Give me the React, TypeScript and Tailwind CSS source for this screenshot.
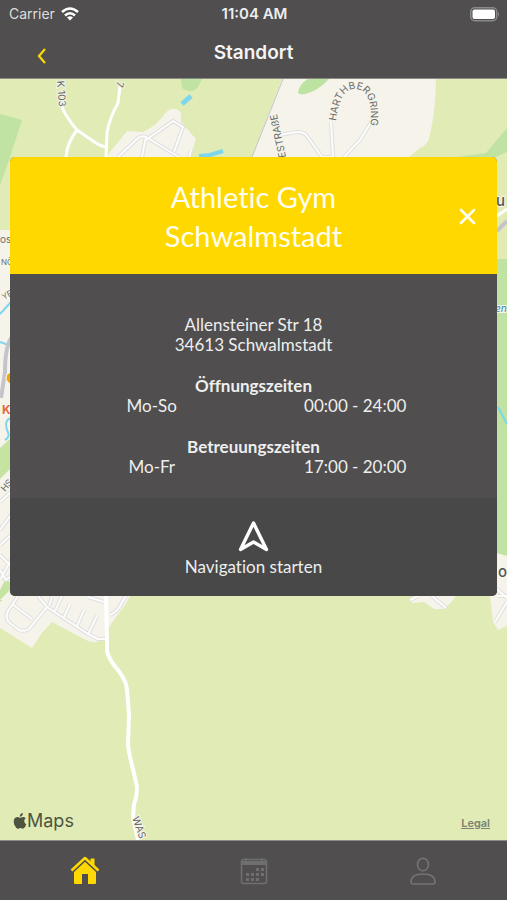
import { useState } from 'react'
import type { ReactNode } from 'react'

interface Hours {
  title: string
  rows: { days: string; time: string }[]
}

const HOURS: Hours[] = [
  { title: 'Öffnungszeiten', rows: [{ days: 'Mo-So', time: '00:00 - 24:00' }] },
  { title: 'Betreuungszeiten', rows: [{ days: 'Mo-Fr', time: '17:00 - 20:00' }] },
]

// light roads inside the built-up areas
const STREETS = [
  'M118 157L137 139Q141 135 146 137L179 157',
  'M146 140L173 121L183 127L174 152',
  'M146 137L142 157',
  'M191 150L189 158',
  'M281 135C293 133 301 129 307 136L322 157H333L331 122',
  'M373 119L360 140L344 157',
  'M18 596L8 611Q4 619 11 624L19 630Q24 632 29 629L47 607',
  'M12 604L32 619',
  'M38 596L47 607L88 634L98 639H107',
  'M52 597L49 606',
  'M62 596L55 611',
  'M70 604L64 617',
  'M84 610L77 626',
  'M97 616L88 634',
  'M88 597L104 602',
  'M110 615Q119 611 122 602L126 596',
  'M0 502L11 492',
  'M0 530L11 515',
  'M0 545L11 535',
  'M0 555L11 566',
  'M0 580L11 560',
  'M0 570L6 580L11 576',
  'M432 596L446 608',
  'M410 600L418 596',
  'M497 596H507',
  'M495 622L507 602',
  'M497 589L507 598',
]

function MapView() {
  return (
    <svg
      className="absolute inset-0 w-full h-full"
      viewBox="0 79 507 761"
      preserveAspectRatio="xMidYMid slice"
      aria-hidden="true"
      fontFamily="Inter, sans-serif"
    >
      <defs>
        <path id="ring" d="M336 121C338 106 342 89 355 89C368 89 373 104 370 130" />
      </defs>
      <rect y="79" width="507" height="761" fill="#e0ebb6" />

      {/* woods and meadows */}
      <g fill="#c0e2a2">
        <path d="M0 114L22 120L9 160L0 185Z" />
        <path d="M181 79H202L198 87Q191 95 182 88Z" />
        <path d="M457 157L486 153L507 128V560H496V157Z" />
        <path d="M0 596L11 588V590L0 602Z" />
      </g>
      <path d="M496 157L507 152V259H496Z" fill="#e0ebb6" />

      {/* built-up areas */}
      <g fill="#f5f3ea">
        <path d="M106 157L127 131L143 132Q158 125 166 112Q175 105 181 113V122L196 139L190 158Z" />
        <path d="M282 79H436Q436 110 429 139Q426 146 420 148L409 157H252Z" />
        <path d="M0 230H12V600H0Z" />
        <path d="M8 596H130L125 605L109 627L107 639L96 642Q90 643 84 639L52 622L42 633L32 648L0 628V602Z" />
        <path d="M410 601L418 596H456L450 604L443 609H434L424 602L412 603Z" />
        <path d="M490 596L497 553L507 556V626L498 630L493 622Z" />
      </g>
      <path d="M298 92Q300 83 308 79H329Q318 91 305 94Q298 95 298 92Z" fill="#bce3a1" />
      <path d="M0 448L11 438V468L0 479Z" fill="#c5e3a1" />
      <path d="M0 590L6 578L11 584V589L0 600Z" fill="#c5e3a1" />

      {/* water */}
      <g fill="none" stroke="#7ed6ed" strokeLinecap="butt">
        <path d="M182 104L191 96" strokeWidth="5" />
        <path d="M199 156L210 155L223 151" strokeWidth="4" />
        <path d="M0 314L11 302" strokeWidth="2" />
        <path d="M0 342L11 346M11 418Q4 420 7 430Q11 437 5 440" strokeWidth="2" />
        <path d="M498 407L507 424" strokeWidth="2" />
      </g>

      {/* main road and railway on the edges */}
      <g fill="none" stroke="#c4c4cb">
        <path d="M11 338Q5 348 5 372L1 398" strokeWidth="4" />
        <path d="M497 231L507 221" strokeWidth="4" />
        <path d="M283 79L252 157" strokeWidth="1" />
      </g>
      <path d="M497 216L507 209" stroke="#fff" strokeWidth="3" />

      <g fill="none" stroke="#e0dfe0" strokeWidth="4" strokeLinejoin="round">
        {STREETS.map(d => <path key={d} d={d} />)}
      </g>
      <g fill="none" stroke="#fdfdfb" strokeWidth="2" strokeLinejoin="round">
        {STREETS.map(d => <path key={d} d={d} />)}
      </g>

      <g fill="none" stroke="#fff" strokeLinejoin="round">
        <path d="M62 107Q66 117 77 130L96 143Q100 146 106 147M77 130Q67 143 66 157" strokeWidth="3" />
        <path d="M120 86L118 103Q109 119 107 133L106 157" strokeWidth="3" />
        <path
          d="M106 596L107 640V651Q109 660 118 670Q127 682 127 690L129 715L128 745Q129 754 133 769L137 787Q137 797 134 804L133 818L138 840"
          strokeWidth="4"
        />
      </g>

      <g fill="#6b6b6b" fontSize="10" stroke="#f5f5ea" strokeWidth="2" paintOrder="stroke">
        <text transform="translate(57 81) rotate(86)">K 103</text>
        <text transform="translate(117 81) rotate(102)">7</text>
        <text>
          <textPath href="#ring">HARTHBERGRING</textPath>
        </text>
        <text transform="translate(286 157) rotate(-102)">ESTRAßE</text>
        <text transform="translate(132 818) rotate(70)">WAS</text>
        <text x="0" y="243">os</text>
        <text x="1" y="265" fontSize="8">NÖ</text>
        <text transform="translate(4 300) rotate(-30)" fontSize="8">YE</text>
        <text transform="translate(5 492) rotate(-50)" fontSize="9">HS</text>
      </g>
      <g fontSize="15" fontWeight="500" fill="#555" stroke="#f8f8f0" strokeWidth="2" paintOrder="stroke">
        <text x="496" y="206">u</text>
        <text x="498" y="577">o</text>
        <text x="2" y="414" fontSize="12" fontWeight="700" fill="#e0683c">K</text>
        <text x="495" y="312" fontSize="10" fontStyle="italic" fill="#4b94c4">en</text>
      </g>
      <circle cx="12" cy="378" r="6" fill="#f5a400" stroke="#fff" />
    </svg>
  )
}

function StatusBar() {
  return (
    <div className="grid grid-cols-3 items-center h-7 pl-[9px] pr-[7px] text-sm">
      <div className="flex items-center gap-1.5">
        <span className="text-[#dedede]">Carrier</span>
        <svg className="w-[18px] h-[14px]" viewBox="0 0 18 14" fill="none" stroke="#fff" strokeWidth="2.6" aria-label="WLAN">
          <path d="M1 5Q9-2 17 5M4 8.5Q9 4 14 8.5" />
          <path d="M9 13.5L6 10.5Q9 8 12 10.5Z" fill="#fff" stroke="none" />
        </svg>
      </div>
      <span className="text-center text-[15px] font-semibold text-[#ededed]">11:04 AM</span>
      <svg className="justify-self-end w-[30px] h-[15px]" viewBox="0 0 30 15" aria-label="Akku">
        <rect x="0.75" y="0.75" width="26" height="13" rx="4" fill="none" stroke="#8b8a8b" strokeWidth="1.5" />
        <rect x="2.5" y="2.5" width="22.5" height="9.5" rx="2" fill="#fff" />
        <path d="M28 5Q30 7.2 28 9.5Z" fill="#8b8a8b" />
      </svg>
    </div>
  )
}

function LocationCard({ onClose }: { onClose: () => void }) {
  return (
    <section className="relative mx-2.5 rounded-[5px] overflow-hidden text-center text-[#eeeeee] bg-[#504e4e] font-['Lato',sans-serif] [font-variant-ligatures:none]">
      <div className="grid grid-cols-[1fr_auto_1fr] items-center bg-[#ffd800] pt-5 pb-[19px]">
        <h2 className="col-start-2 w-48 text-[29px] leading-[39px] text-[#fffef0]">Athletic Gym Schwalmstadt</h2>
        <button type="button" aria-label="Schließen" onClick={onClose} className="justify-self-end mr-5">
          <svg className="w-[19px] h-[19px]" viewBox="0 0 19 19" fill="none" stroke="#fffef0" strokeWidth="2.6" strokeLinecap="round">
            <path d="M3 3L16 16M16 3L3 16" />
          </svg>
        </button>
      </div>

      <div className="px-10 pt-[41px] pb-[21px] text-[17px] leading-5">
        <address className="not-italic">
          Allensteiner Str 18
          <br />
          34613 Schwalmstadt
        </address>
        {HOURS.map(h => (
          <table key={h.title} className="w-full mt-[21px] table-fixed">
            <caption className="font-bold">{h.title}</caption>
            <tbody>
              {h.rows.map(r => (
                <tr key={r.days}>
                  <th scope="row" className="font-normal">{r.days}</th>
                  <td>{r.time}</td>
                </tr>
              ))}
            </tbody>
          </table>
        ))}
      </div>

      <button type="button" className="flex flex-col items-center gap-1 w-full pt-[22px] pb-[19px] bg-[#484848] text-[17px] leading-5">
        <svg className="w-[33px] h-[33px]" viewBox="0 0 33 33" fill="none" stroke="#fff" strokeWidth="3.4" strokeLinejoin="round">
          <path d="M16.5 3L29.5 29.5L16.5 22L3.5 29.5Z" />
        </svg>
        Navigation starten
      </button>
    </section>
  )
}

function Tab({ label, children }: { label: string; children: ReactNode }) {
  return (
    <a href="#" aria-label={label} className="flex items-center justify-center h-[59px]">
      {children}
    </a>
  )
}

export default function App() {
  const [open, setOpen] = useState(true)

  return (
    <div className="flex flex-col min-h-screen bg-[#504e4e] font-['Inter',sans-serif]">
      <header className="border-b border-[#8a8a86]">
        <StatusBar />
        <div className="grid grid-cols-3 items-center h-[50px]">
          <button type="button" aria-label="Zurück" className="justify-self-start ml-9 mt-1.5">
            <svg className="w-3 h-4" viewBox="0 0 12 16" fill="none" stroke="#ffd800" strokeWidth="2.2">
              <path d="M9 1L3 8L9 15" />
            </svg>
          </button>
          <h1 className="text-center text-[19px] leading-6 font-semibold text-[#f4f4f4]">Standort</h1>
        </div>
      </header>

      <main className="relative flex flex-col flex-1 pt-[78px]">
        <MapView />
        {open && <LocationCard onClose={() => setOpen(false)} />}
        <div className="relative flex items-end justify-between mt-auto pl-[13px] pr-[17px] pb-[7px] text-[#4e5440]">
          <div className="flex items-center text-lg leading-6">
            <svg className="w-[14px] h-4" viewBox="0 0 14 16" fill="currentColor" aria-hidden="true">
              <path d="M9.8 0Q10 2.2 8.7 3.1Q7.8 3.9 6.8 3.8Q6.7 2.1 7.7 1.1Q8.6.2 9.8 0ZM12.7 5.3Q11.2 6.4 11.2 8.2Q11.3 10.4 13.3 11.3Q12.4 14 10.8 15.3Q9.8 16 8.6 15.3Q7.3 14.8 5.9 15.4Q4.5 16.1 3.4 15.1Q.6 12.2.7 8.3Q1 4.6 4.1 4.1Q5.2 4 6.3 4.5Q7 4.8 8.1 4.4Q11 3.4 12.7 5.3Z" />
            </svg>
            Maps
          </div>
          <a href="#" className="text-[11px] leading-5 font-semibold underline text-[#7c8270]">Legal</a>
        </div>
      </main>

      <nav className="grid grid-cols-3 border-t border-[#8a8a86]">
        <Tab label="Start">
          <svg className="w-[30px] h-[30px]" viewBox="0 0 30 30">
            <path d="M4 15L15 5L26 15V27Q26 28 25 28H18V18H12V28H5Q4 28 4 27Z" fill="#ffd800" />
            <path d="M1.5 15L15 2.5L28.5 15" fill="none" stroke="#504e4e" strokeWidth="5" />
            <path d="M20.5 2.5H24.5V10L20.5 6Z" fill="#ffd800" />
            <path d="M1.5 14.5L15 2L28.5 14.5" fill="none" stroke="#ffd800" strokeWidth="2.6" strokeLinejoin="round" />
          </svg>
        </Tab>
        <Tab label="Kurse">
          <svg className="w-7 h-7" viewBox="0 0 28 28" fill="none" stroke="#706f6f" strokeWidth="1.6">
            <rect x="1.5" y="2.5" width="25" height="24" rx="2" />
            <path d="M2 6H26" strokeWidth="4" />
            <path d="M6 1V5M22 1V5" />
            <g fill="#706f6f" stroke="none">
              <path d="M16 11h3v3h-3zM21 11h3v3h-3zM6 16h3v3H6zM11 16h3v3h-3zM16 16h3v3h-3zM21 16h3v3h-3zM6 21h3v3H6zM11 21h3v3h-3zM16 21h3v3h-3z" />
            </g>
          </svg>
        </Tab>
        <Tab label="Profil">
          <svg className="w-7 h-7" viewBox="0 0 28 28" fill="none" stroke="#757474" strokeWidth="1.6">
            <ellipse cx="14" cy="7.5" rx="5.5" ry="6.3" />
            <path d="M2 25Q2 17 14 17T26 25Q26 27 24 27H4Q2 27 2 25Z" />
          </svg>
        </Tab>
      </nav>
    </div>
  )
}
